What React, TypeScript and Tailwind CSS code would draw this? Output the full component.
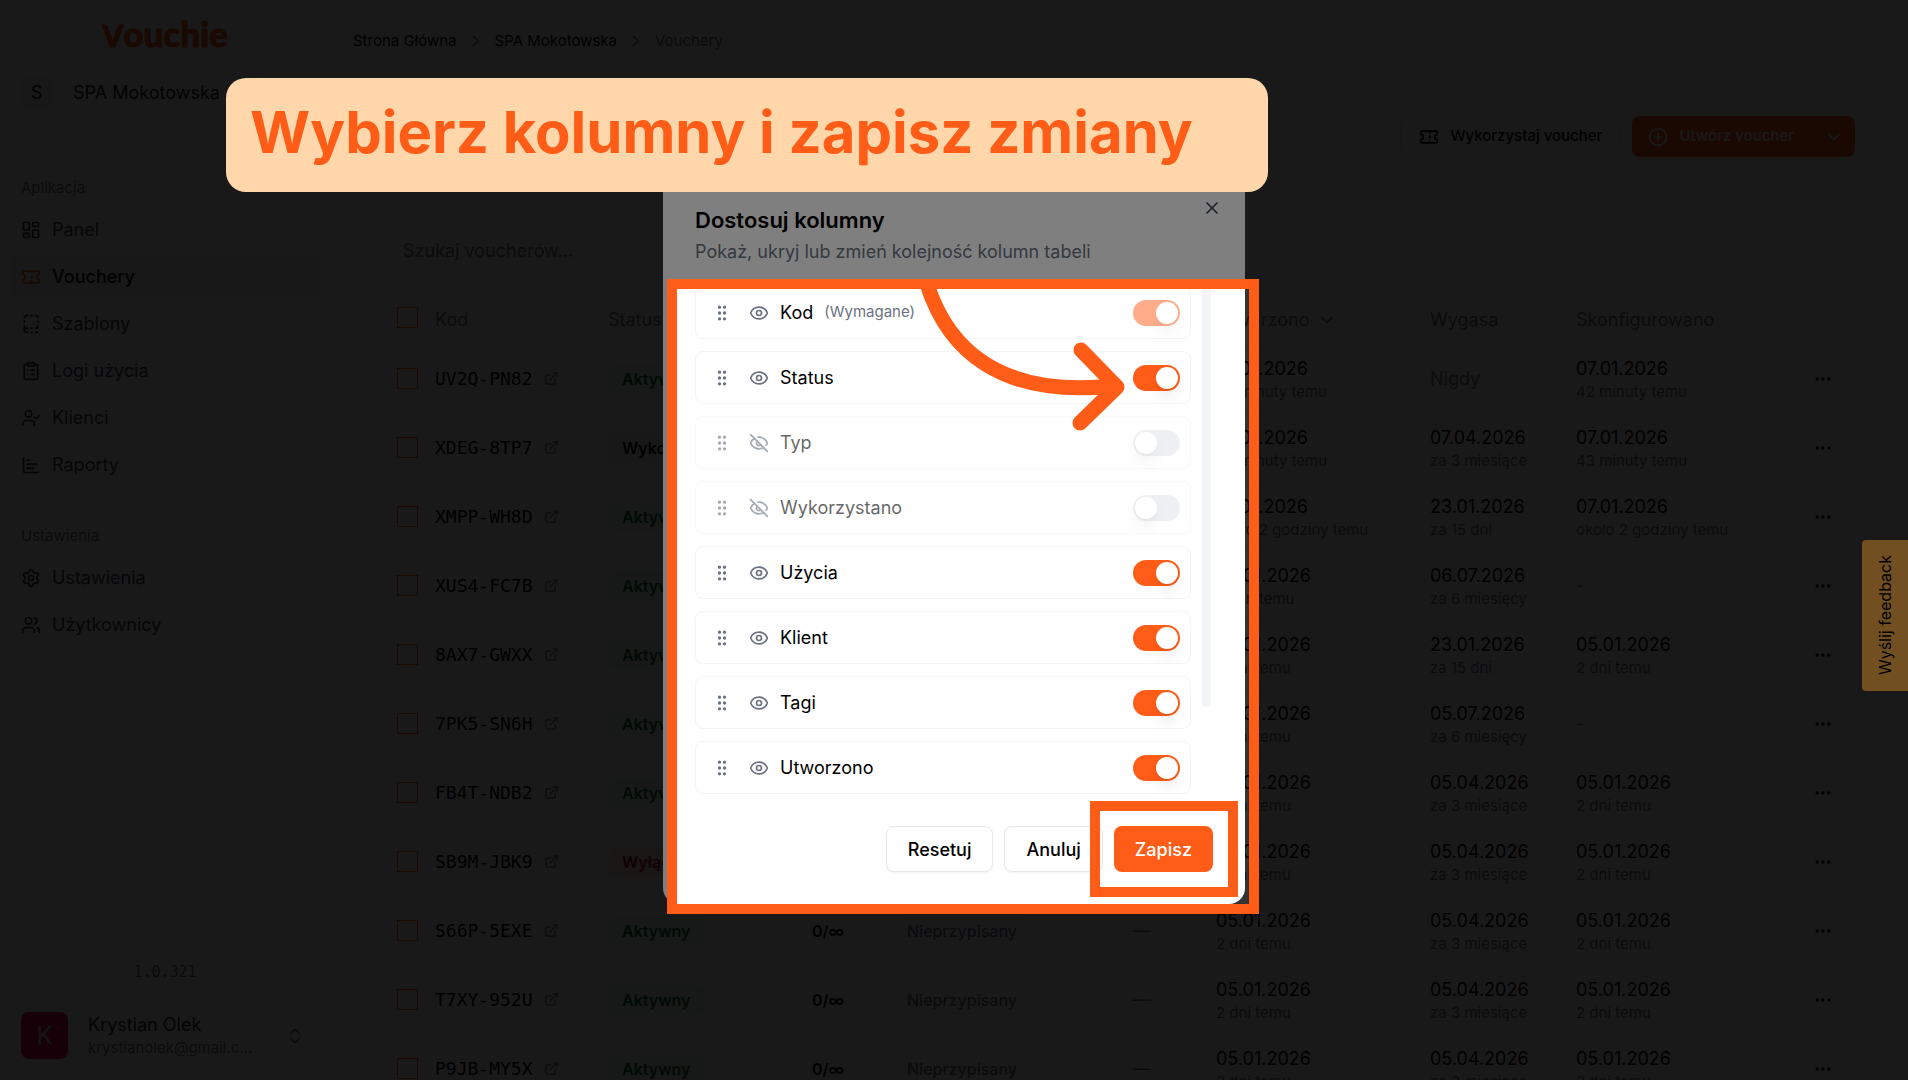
import React from "react";
import {
  BookDashed, ChartBar, ChevronDown, ChevronRight, ChevronsUpDown, CirclePlus, ClipboardList,
  Ellipsis, ExternalLink, Eye, EyeOff, GripVertical, LayoutDashboard, Settings, Ticket,
  UserCheck, Users, X, type LucideIcon,
} from "lucide-react";

type NavEntry = { label: string; icon: LucideIcon; active?: boolean };

const appNav: NavEntry[] = [
  { label: "Panel", icon: LayoutDashboard },
  { label: "Vouchery", icon: Ticket, active: true },
  { label: "Szablony", icon: BookDashed },
  { label: "Logi użycia", icon: ClipboardList },
  { label: "Klienci", icon: UserCheck },
  { label: "Raporty", icon: ChartBar },
];

const settingsNav: NavEntry[] = [
  { label: "Ustawienia", icon: Settings },
  { label: "Użytkownicy", icon: Users },
];

type Stamp = [string, string];
type Voucher = { code: string; status: string; created: Stamp; expires: Stamp | "Nigdy"; configured?: Stamp };

const january5: Stamp = ["05.01.2026", "2 dni temu"];
const april5: Stamp = ["05.04.2026", "za 3 miesiące"];

const vouchers: Voucher[] = [
  { code: "UV2Q-PN82", status: "Aktywny", created: ["07.01.2026", "42 minuty temu"], expires: "Nigdy", configured: ["07.01.2026", "42 minuty temu"] },
  { code: "XDEG-8TP7", status: "Wykorzystany", created: ["07.01.2026", "43 minuty temu"], expires: ["07.04.2026", "za 3 miesiące"], configured: ["07.01.2026", "43 minuty temu"] },
  { code: "XMPP-WH8D", status: "Aktywny", created: ["07.01.2026", "około 2 godziny temu"], expires: ["23.01.2026", "za 15 dni"], configured: ["07.01.2026", "około 2 godziny temu"] },
  { code: "XUS4-FC7B", status: "Aktywny", created: ["06.01.2026", "dzień temu"], expires: ["06.07.2026", "za 6 miesięcy"] },
  { code: "8AX7-GWXX", status: "Aktywny", created: january5, expires: ["23.01.2026", "za 15 dni"], configured: january5 },
  { code: "7PK5-SN6H", status: "Aktywny", created: january5, expires: ["05.07.2026", "za 6 miesięcy"] },
  { code: "FB4T-NDB2", status: "Aktywny", created: january5, expires: april5, configured: january5 },
  { code: "SB9M-JBK9", status: "Wyłączony", created: january5, expires: april5, configured: january5 },
  { code: "S66P-5EXE", status: "Aktywny", created: january5, expires: april5, configured: january5 },
  { code: "T7XY-952U", status: "Aktywny", created: january5, expires: april5, configured: january5 },
  { code: "P9JB-MY5X", status: "Aktywny", created: january5, expires: april5, configured: january5 },
];

const statusStyle: Record<string, string> = {
  Aktywny: "bg-emerald-50 text-green-800",
  Wykorzystany: "bg-gray-100 text-black",
  Wyłączony: "bg-red-100 text-red-700",
};

type ColumnOption = { label: string; on: boolean; required?: boolean };

const columnOptions: ColumnOption[] = [
  { label: "Kod", on: true, required: true },
  { label: "Status", on: true },
  { label: "Typ", on: false },
  { label: "Wykorzystano", on: false },
  { label: "Użycia", on: true },
  { label: "Klient", on: true },
  { label: "Tagi", on: true },
  { label: "Utworzono", on: true },
];

function NavGroup({ title, items }: { title: string; items: NavEntry[] }) {
  return (
    <div>
      <p className="mb-[5px] flex h-8 items-center px-[11px] text-[15px] text-gray-500">{title}</p>
      <ul className="flex flex-col gap-[6px]">
        {items.map(({ label, icon: Icon, active }) => (
          <li key={label}>
            <a
              href="#"
              className={`flex h-[41px] items-center gap-[11px] rounded-lg px-[11px] text-[18px] ${
                active ? "bg-gray-100 font-medium text-black" : "text-gray-700"
              }`}
            >
              <Icon size={20} className={active ? "text-[#ff5c17]" : "text-gray-800"} />
              {label}
            </a>
          </li>
        ))}
      </ul>
    </div>
  );
}

function Sidebar() {
  return (
    <aside className="flex w-[331px] shrink-0 flex-col border-r border-gray-200 px-[10px]">
      <div className="flex h-[68px] items-center justify-center">
        <span className="pb-[2px] font-['Lato',sans-serif] text-[35px] leading-none font-black text-[#ff5c17] [-webkit-text-stroke:1px_#ff5c17]">
          <span className="text-[30px]">V</span>ouchie
        </span>
      </div>
      <button className="mt-2 flex h-8 items-center gap-[21px] px-[11px] text-left text-[18px] text-gray-900">
        <span className="flex size-[31px] items-center justify-center rounded bg-gray-100">S</span>
        SPA Mokotowska
      </button>
      <nav className="mt-16 flex flex-col gap-[35px]">
        <NavGroup title="Aplikacja" items={appNav} />
        <NavGroup title="Ustawienia" items={settingsNav} />
      </nav>
      <p className="mt-auto text-center font-['DejaVu_Sans_Mono',monospace] text-[15px] text-gray-500">1.0.321</p>
      <button className="mt-[29px] mb-[21px] flex items-center px-[11px] text-left">
        <span className="flex size-[47px] items-center justify-center rounded-lg bg-[#e0105a] text-[24px] text-gray-300">K</span>
        <span className="ml-5 flex-1">
          <span className="block text-[18px] leading-6 text-gray-800">Krystian Olek</span>
          <span className="block text-[15px] leading-[22px] text-gray-500">krystianolek@gmail.c...</span>
        </span>
        <ChevronsUpDown size={20} className="mr-1 text-gray-500" />
      </button>
    </aside>
  );
}

function DateCell({ stamp }: { stamp: Stamp }) {
  return (
    <div className="pt-[2px]">
      <div className="text-[18px] leading-6 text-black">{stamp[0]}</div>
      <div className="text-[15px] leading-[22px] text-gray-500">{stamp[1]}</div>
    </div>
  );
}

function Checkbox({ label }: { label: string }) {
  return (
    <input
      type="checkbox"
      aria-label={label}
      className="block size-[21px] appearance-none border border-[#ff5c17] bg-white"
    />
  );
}

function VoucherTable() {
  return (
    <table className="mt-[25px] w-full table-fixed text-left text-[18px]">
      <colgroup>
        <col className="w-[38px]" />
        <col className="w-[173px]" />
        <col className="w-[194px]" />
        <col className="w-[91px]" />
        <col className="w-[240px]" />
        <col className="w-[83px]" />
        <col className="w-[214px]" />
        <col className="w-[146px]" />
        <col />
        <col className="w-16" />
      </colgroup>
      <thead>
        <tr className="h-12 border-b border-gray-200 text-gray-500 [&>th]:px-[11px] [&>th]:font-normal">
          <th className="pb-[5px]"><Checkbox label="Zaznacz wszystkie" /></th>
          <th>Kod</th>
          <th>Status</th>
          <th>Użycia</th>
          <th>Klient</th>
          <th>Tagi</th>
          <th>
            <button className="flex items-center gap-2">
              Utworzono <ChevronDown size={20} />
            </button>
          </th>
          <th>Wygasa</th>
          <th>Skonfigurowano</th>
          <th />
        </tr>
      </thead>
      <tbody>
        {vouchers.map((v) => (
          <tr key={v.code} className="h-[69px] border-b border-gray-200 [&>td]:px-[11px]">
            <td><Checkbox label={`Zaznacz ${v.code}`} /></td>
            <td>
              <a href="#" className="flex items-center gap-[11px] font-['DejaVu_Sans_Mono',monospace] text-black">
                {v.code}
                <ExternalLink size={15} className="shrink-0 text-gray-500" />
              </a>
            </td>
            <td>
              <span className={`inline-flex h-7 items-center rounded-md px-[14px] text-[16px] font-semibold ${statusStyle[v.status]}`}>
                {v.status}
              </span>
            </td>
            <td>
              <span className="inline-flex px-[10px] text-[16px] font-semibold text-black">0/∞</span>
            </td>
            <td>
              <span className="inline-flex h-7 items-center rounded-md border border-gray-100 px-[13px] text-[16px] font-medium text-gray-500">
                Nieprzypisany
              </span>
            </td>
            <td className="text-gray-500">—</td>
            <td className="whitespace-nowrap"><DateCell stamp={v.created} /></td>
            <td className="whitespace-nowrap text-gray-500">
              {v.expires === "Nigdy" ? "Nigdy" : <DateCell stamp={v.expires} />}
            </td>
            <td className="whitespace-nowrap text-gray-500">
              {v.configured ? <DateCell stamp={v.configured} /> : "-"}
            </td>
            <td>
              <button aria-label="Więcej" className="flex size-[41px] items-center justify-center">
                <Ellipsis size={20} />
              </button>
            </td>
          </tr>
        ))}
      </tbody>
    </table>
  );
}

function VouchersPage() {
  return (
    <main className="min-w-0 flex-1">
      <nav className="flex h-[82px] items-center gap-[10px] px-[22px] text-[15px] text-black">
        <a href="#">Strona Główna</a>
        <ChevronRight size={18} className="text-gray-500" />
        <a href="#">SPA Mokotowska</a>
        <ChevronRight size={18} className="text-gray-500" />
        <span className="text-gray-500">Vouchery</span>
      </nav>
      <div className="pt-[34px] pr-[53px] pl-[55px]">
        <div className="flex justify-end gap-[11px]">
          <button className="flex h-[41px] items-center gap-[11px] rounded-lg border border-gray-200 px-[18px] text-[15px] font-medium text-black">
            <Ticket size={20} />
            Wykorzystaj voucher
          </button>
          <div className="flex h-[41px] rounded-lg bg-[#ff5c17] text-[15px] font-medium text-white">
            <button className="flex items-center gap-[11px] pl-4">
              <CirclePlus size={20} />
              Utwórz voucher
            </button>
            <button aria-label="Więcej opcji" className="flex w-[61px] items-center justify-end pr-[11px]">
              <ChevronDown size={20} />
            </button>
          </div>
        </div>
        <input
          type="search"
          aria-label="Szukaj voucherów"
          placeholder="Szukaj voucherów..."
          className="mt-[73px] block h-[41px] w-[420px] rounded-lg border border-gray-200 px-4 text-[18px] placeholder:text-gray-500"
        />
        <VoucherTable />
      </div>
    </main>
  );
}

function ColumnRow({ label, on, required }: ColumnOption) {
  const VisibilityIcon = on ? Eye : EyeOff;
  return (
    <li className={`flex h-[53px] items-center rounded-lg border border-gray-100 bg-white pr-[10px] pl-4 ${on ? "" : "opacity-60"}`}>
      <GripVertical size={20} className="text-gray-500" />
      <VisibilityIcon size={20} className="mr-[11px] ml-[17px] text-gray-500" />
      <label htmlFor={`column-${label}`} className="text-[18px] text-black">{label}</label>
      {required && <span className="ml-[11px] text-[15px] text-gray-500">(Wymagane)</span>}
      <input
        id={`column-${label}`}
        type="checkbox"
        role="switch"
        defaultChecked={on}
        disabled={required}
        className="ml-auto h-[26px] w-[47px] appearance-none rounded-full bg-gray-200 p-[2px] before:block before:size-[22px] before:rounded-full before:bg-white before:shadow-lg checked:bg-[#ff5c17] checked:before:translate-x-[21px] disabled:opacity-50"
      />
    </li>
  );
}

function ColumnsDialog() {
  return (
    <div role="dialog" aria-labelledby="columns-title" className="relative w-[582px] rounded-2xl bg-white px-8 pt-[30px] pb-8">
      <h2 id="columns-title" className="text-[22px] leading-7 font-semibold text-black">Dostosuj kolumny</h2>
      <p className="mt-1 text-[18px] leading-7 text-gray-500">Pokaż, ukryj lub zmień kolejność kolumn tabeli</p>
      <button aria-label="Zamknij" className="absolute top-[22px] right-[23px] text-gray-700">
        <X size={20} />
      </button>
      <div className="mt-5 flex gap-[11px]">
        <ul className="flex flex-1 flex-col gap-3">
          {columnOptions.map((c) => <ColumnRow key={c.label} {...c} />)}
        </ul>
        <div className="mr-[2px] h-[421px] w-[9px] rounded-full bg-gray-100" />
      </div>
      <div className="mt-8 flex justify-end gap-[11px] text-[18px] font-medium text-black">
        <button className="h-[46px] rounded-lg border border-gray-200 px-[21px] shadow-xs">Resetuj</button>
        <button className="h-[46px] rounded-lg border border-gray-200 px-[21px] shadow-xs">Anuluj</button>
        <button className="relative h-[46px] rounded-lg bg-[#ff5c17] px-[21px] text-white">
          Zapisz
          <span className="absolute -inset-[25px] -left-[24px] border-10 border-[#ff5c17]" />
        </button>
      </div>

      {/* Spotlight frame: everything outside of it is darkened */}
      <div className="pointer-events-none absolute top-[103px] -right-[14px] -bottom-[10px] left-1 border-10 border-[#ff5c17] shadow-[0_0_0_2000px_rgb(0_0_0/0.5)]" />
      <svg
        viewBox="0 0 230 160"
        className="pointer-events-none absolute top-[104px] left-[237px] h-[160px] w-[230px]"
        fill="none"
        stroke="#ff5c17"
        strokeWidth="15"
        strokeLinecap="round"
        strokeLinejoin="round"
      >
        <path d="M27 4 C48 70 100 118 214 106" />
        <path d="M181 70 L217 107 L180 143" />
      </svg>
      <div className="absolute -top-[98px] -left-[437px] flex h-[114px] w-[1042px] items-center rounded-[20px] bg-[#ffd7aa] pb-[5px] pl-6 text-[58px] font-bold whitespace-nowrap text-[#ff5c17]">
        Wybierz kolumny i zapisz zmiany
      </div>
    </div>
  );
}

export default function App() {
  return (
    <div className="relative flex h-screen overflow-hidden bg-white font-['Inter',sans-serif]">
      <Sidebar />
      <VouchersPage />
      <div className="absolute inset-0 bg-black/80" />
      <button className="absolute top-1/2 right-0 flex h-[151px] w-[46px] items-center justify-center rounded-l bg-[#e49e42] text-[16px] text-black">
        <span className="rotate-180 [writing-mode:vertical-rl]">Wyślij feedback</span>
      </button>
      <div className="absolute inset-0 flex items-center justify-center">
        <ColumnsDialog />
      </div>
    </div>
  );
}
